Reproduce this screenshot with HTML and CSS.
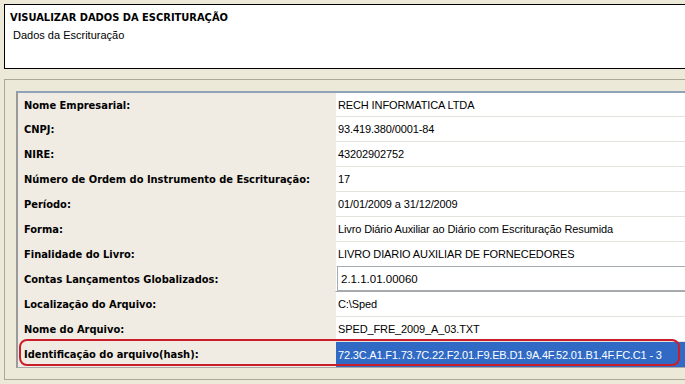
FILE: index.html
```html
<!DOCTYPE html>
<html>
<head>
<meta charset="utf-8">
<link rel="stylesheet" href="styles.css">
</head>
<body>
<div class="header">
  <div class="title">VISUALIZAR DADOS DA ESCRITURAÇÃO</div>
  <div class="subtitle">Dados da Escrituração</div>
</div>
<div class="group">
  <div class="grid">
    <div class="row first"><div class="label">Nome Empresarial:</div><div class="value">RECH INFORMATICA LTDA</div></div>
    <div class="row"><div class="label">CNPJ:</div><div class="value">93.419.380/0001-84</div></div>
    <div class="row"><div class="label">NIRE:</div><div class="value">43202902752</div></div>
    <div class="row"><div class="label">Número de Ordem do Instrumento de Escrituração:</div><div class="value">17</div></div>
    <div class="row"><div class="label">Período:</div><div class="value">01/01/2009 a 31/12/2009</div></div>
    <div class="row"><div class="label">Forma:</div><div class="value">Livro Diário Auxiliar ao Diário com Escrituração Resumida</div></div>
    <div class="row"><div class="label">Finalidade do Livro:</div><div class="value">LIVRO DIARIO AUXILIAR DE FORNECEDORES</div></div>
    <div class="row"><div class="label">Contas Lançamentos Globalizados:</div><div class="value boxed"><div class="textbox">2.1.1.01.00060</div></div></div>
    <div class="row"><div class="label">Localização do Arquivo:</div><div class="value">C:\Sped</div></div>
    <div class="row"><div class="label">Nome do Arquivo:</div><div class="value">SPED_FRE_2009_A_03.TXT</div></div>
    <div class="row last"><div class="label">Identificação do arquivo(hash):</div><div class="value selected">72.3C.A1.F1.73.7C.22.F2.01.F9.EB.D1.9A.4F.52.01.B1.4F.FC.C1 - 3</div></div>
  </div>
</div>
<div class="highlight"></div>
</body>
</html>
```
FILE: styles.css
```css
html, body {
  margin: 0;
  padding: 0;
  background: #ece9d8;
  width: 685px;
  height: 384px;
  overflow: hidden;
  font-family: Tahoma, "Liberation Sans", sans-serif;
  font-size: 11px;
  color: #000;
}
.header {
  margin: 4px 0 0 4px;
  height: 63px;
  border: 1px solid #000;
  border-right: none;
  background: #fff;
  box-sizing: content-box;
  padding: 0;
}
.title {
  font-family: "DejaVu Sans", sans-serif;
  font-stretch: condensed;
  font-weight: bold;
  font-size: 11px;
  padding: 6px 0 0 5px;
  line-height: 14px;
}
.subtitle {
  font-family: "Liberation Sans", sans-serif;
  font-size: 11px;
  padding: 4px 0 0 8px;
  line-height: 13px;
}
.group {
  margin: 10px 0 0 4px;
  border: 1px solid #aca899;
  border-right: none;
  padding: 11px 0 0 11px;
  box-sizing: border-box;
  height: 301px;
}
.grid {
  border-top: 2px solid #8ea2b8;
  border-left: 2px solid #9a9a9a;
  border-bottom: 1px solid #a8a8a8;
  display: flex;
  flex-direction: column;
  background: #f0ece3;
}
.row {
  display: grid;
  grid-template-columns: 317px 1fr;
  height: 25px;
}
.row.first { height: 24px; }
.label {
  font-family: "DejaVu Sans", sans-serif;
  font-stretch: condensed;
  font-weight: bold;
  font-size: 11px;
  display: flex;
  align-items: center;
  padding-left: 6px;
  white-space: nowrap;
}
.value {
  background: #fff;
  border-bottom: 1px solid #e4e2dc;
  border-left: 1px solid #eeece6;
  font-family: "Liberation Sans", sans-serif;
  font-size: 11px;
  letter-spacing: -0.12px;
  display: flex;
  align-items: center;
  padding-left: 2px;
  white-space: nowrap;
}
.row.last .value { border-bottom: none; }
.value.boxed {
  padding: 0 0 0 1px;
  align-items: stretch;
  border-bottom: 1px solid #a8a8a8;
}
.textbox {
  flex: 1;
  border: 1px solid #a5acb5;
  border-right: none;
  display: flex;
  align-items: center;
  padding-left: 3px;
  font-size: 11.5px;
  letter-spacing: 0;
  margin-top: -1px;
}
.value.selected {
  background: #316ac5;
  color: #fff;
  letter-spacing: -0.18px;
}
.highlight {
  position: absolute;
  left: 19px;
  top: 339px;
  width: 657px;
  height: 23px;
  border: 2px solid #cc1d2b;
  border-radius: 8px;
}
```
